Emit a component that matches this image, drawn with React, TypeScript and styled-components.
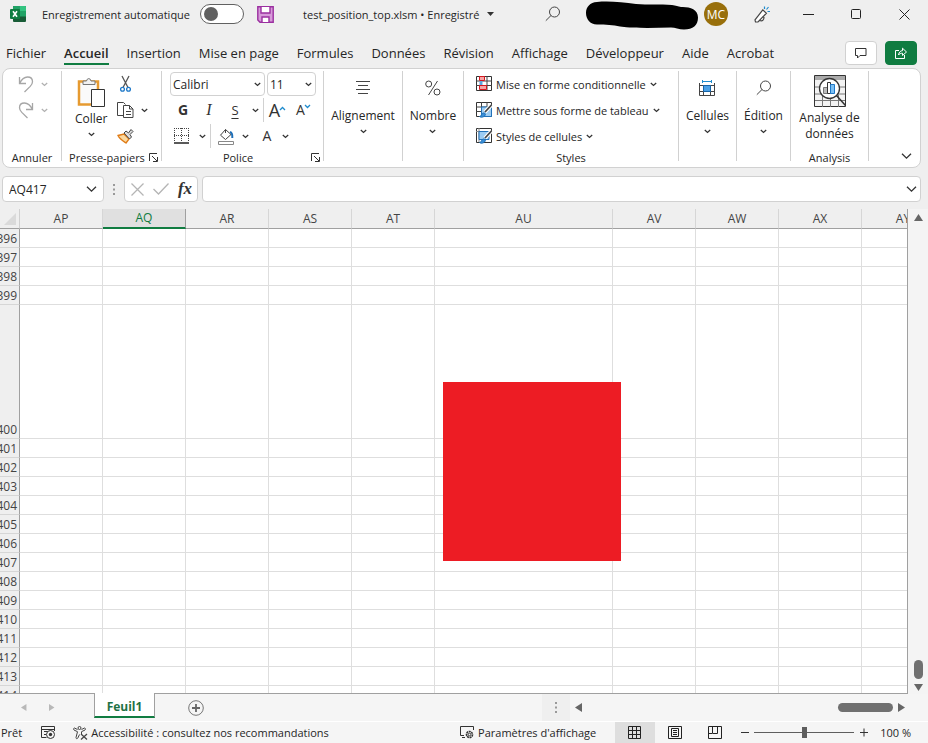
import React from "react";
import styled, { createGlobalStyle, css } from "styled-components";

const GlobalStyle = createGlobalStyle`
  * { box-sizing: border-box; }
  body { margin: 0; background: #efefef; }
  body, button, input, select { font-family: "Open Sans", "Noto Sans", sans-serif; font-size: 12px; color: #262626; }
  button { padding: 0; border: 0; background: none; white-space: nowrap; }
`;

const Window = styled.div`
  display: flex;
  flex-direction: column;
  height: 100vh;
  min-height: 480px;
  overflow: hidden;
  background: #efefef;
`;

const Icon = styled.svg`
  display: block;
  flex: none;
  fill: none;
  stroke: #444;
  overflow: visible;
`;

const Spacer = styled.div<{ $max?: number }>`
  flex: 1;
  ${(p) => p.$max && `max-width: ${p.$max}px;`}
`;

/* ---------- title bar ---------- */

const TitleBar = styled.header`
  display: flex;
  align-items: center;
  height: 28px;
  padding-left: 10px;
  flex: none;
`;

const AutoSave = styled.label`
  display: flex;
  align-items: center;
  gap: 10px;
  margin-left: 16px;
  font-size: 11px;
  white-space: nowrap;
`;

const Toggle = styled.input`
  appearance: none;
  display: flex;
  align-items: center;
  width: 44px;
  height: 20px;
  margin: 0;
  border: 1px solid #616161;
  border-radius: 10px;
  background: #fff;
  &::before {
    content: "";
    width: 14px;
    height: 14px;
    margin-left: 3px;
    border-radius: 50%;
    background: #616161;
  }
`;

const IconButton = styled.button<{ $w?: number; $ml?: number }>`
  display: flex;
  align-items: center;
  justify-content: center;
  flex: none;
  width: ${(p) => p.$w ?? 24}px;
  height: 24px;
  margin-left: ${(p) => p.$ml ?? 0}px;
`;

const FileName = styled.button`
  display: flex;
  align-items: center;
  gap: 8px;
  margin-left: 29px;
  font-size: 11px;
`;

const Avatar = styled.button`
  width: 24px;
  height: 24px;
  margin: 0 22px 0 5px;
  border-radius: 50%;
  background: #986f0b;
  color: #fff;
  flex: none;
`;

/* ---------- ribbon tabs ---------- */

const TabBar = styled.nav`
  display: flex;
  align-items: flex-start;
  flex: none;
  height: 40px;
  padding: 0 11px 0 6px;
`;

const TabList = styled.div`
  display: flex;
  gap: 18px;
  margin-top: 15px;
`;

const Tab = styled.button<{ $active?: boolean }>`
  height: 22px;
  line-height: 18px;
  font-size: 13px;
  border-bottom: 2px solid transparent;
  ${(p) =>
    p.$active &&
    css`
      font-weight: 600;
      border-color: #107c41;
    `}
`;

const ActionButton = styled.button<{ $primary?: boolean }>`
  display: flex;
  align-items: center;
  justify-content: center;
  width: 32px;
  height: 24px;
  margin: 13px 0 0 8px;
  border: 1px solid ${(p) => (p.$primary ? "#107c41" : "#d1d1d1")};
  border-radius: 4px;
  background: ${(p) => (p.$primary ? "#107c41" : "#fff")};
`;

/* ---------- ribbon ---------- */

const Ribbon = styled.section`
  display: flex;
  flex: none;
  height: 100px;
  margin: 0 7px 0 2px;
  padding: 2px 0 6px;
  border: 1px solid #d1d1d1;
  border-radius: 8px;
  background: #fff;
`;

const Group = styled.div<{ $w: number }>`
  display: flex;
  flex-direction: column;
  flex: none;
  width: ${(p) => p.$w}px;
  border-right: 1px solid #d1d1d1;
`;

const GroupBody = styled.div<{ $pad?: number; $right?: number; $center?: boolean }>`
  display: flex;
  flex: 1;
  padding-left: ${(p) => p.$pad ?? 0}px;
  padding-right: ${(p) => p.$right ?? 0}px;
  justify-content: ${(p) => (p.$center ? "center" : "flex-start")};
`;

const GroupFooter = styled.div`
  display: flex;
  align-items: center;
  height: 8px;
  padding: 0 3px;
`;

const GroupLabel = styled.span`
  flex: 1;
  text-align: center;
  font-size: 11px;
  white-space: nowrap;
`;

const Column = styled.div`
  display: flex;
  flex-direction: column;
`;

const Row = styled.div<{ $gap?: number }>`
  display: flex;
  align-items: center;
  height: 26px;
  gap: ${(p) => p.$gap ?? 0}px;
`;

const BigButton = styled.button<{ $top?: number; $gap?: number }>`
  display: flex;
  flex-direction: column;
  align-items: center;
  padding-top: ${(p) => p.$top ?? 9}px;
  line-height: 16px;
  gap: ${(p) => p.$gap ?? 12}px;
`;

const BigText = styled.span`
  display: flex;
  flex-direction: column;
  align-items: center;
  gap: 5px;
`;

const StyleButton = styled.button`
  display: flex;
  align-items: center;
  gap: 4px;
  height: 26px;
  font-size: 11px;
`;

const SelectBox = styled.label<{ $w: number }>`
  display: flex;
  align-items: center;
  width: ${(p) => p.$w}px;
  height: 24px;
  padding-right: 3px;
  border: 1px solid #d1d1d1;
  border-radius: 4px;
  background: #fff;
`;

const Select = styled.select`
  appearance: none;
  flex: 1;
  min-width: 0;
  padding: 0 0 0 2px;
  border: 0;
  background: none;
`;

const Divider = styled.span`
  width: 1px;
  height: 24px;
  background: #d1d1d1;
`;

const Letter = styled.button<{ $kind: "bold" | "italic" | "under" | "large" | "small" | "color" }>`
  width: 26px;
  height: 24px;
  line-height: 24px;
  color: #333;
  font-size: 13px;
  ${(p) => p.$kind === "bold" && "font-weight: 700; font-size: 14px;"}
  ${(p) => p.$kind === "italic" && 'font-style: italic; font-family: "Liberation Serif", serif; font-size: 16px;'}
  ${(p) => p.$kind === "under" && "text-decoration: underline; text-underline-offset: 3px;"}
  ${(p) => p.$kind === "large" && "font-size: 18px;"}
  ${(p) => p.$kind === "small" && "font-size: 14px;"}
  ${(p) => p.$kind === "color" && "font-size: 14px; margin-left: 5px;"}
`;

const Caret = styled.sup`
  display: inline-block;
  vertical-align: 7px;
  line-height: 0;
`;

const Expand = styled.div`
  display: flex;
  flex: 1;
  justify-content: flex-end;
  align-items: flex-end;
  padding: 0 8px 2px 0;
`;

/* ---------- formula bar ---------- */

const FormulaBar = styled.div`
  display: flex;
  align-items: center;
  flex: none;
  height: 41px;
  padding: 1px 7px 0 2px;
`;

const Field = styled.label<{ $w?: number }>`
  display: flex;
  align-items: center;
  ${(p) => (p.$w ? `width: ${p.$w}px;` : "flex: 1;")}
  height: 26px;
  padding: 0 ${(p) => (p.$w ? 6 : 3)}px 0 6px;
  border: 1px solid #d1d1d1;
  border-radius: 4px;
  background: #fff;
`;

const TextInput = styled.input`
  flex: 1;
  min-width: 0;
  border: 0;
  padding: 0;
  background: none;
  outline: none;
`;

const FormulaActions = styled.div`
  display: flex;
  align-items: center;
  width: 74px;
  height: 26px;
  margin-right: 4px;
  border: 1px solid #d1d1d1;
  border-radius: 4px;
  background: #fff;
`;

const FxButton = styled.button`
  width: 24px;
  font: italic 700 17px "Liberation Serif", serif;
  line-height: 24px;
  color: #333;
`;

/* ---------- sheet ---------- */

const SheetArea = styled.main`
  display: flex;
  flex: 1;
  min-height: 0;
`;

const Sheet = styled.div`
  position: relative;
  flex: 1;
  min-width: 0;
  overflow: hidden;
  border-bottom: 1px solid #a0a0a0;
`;

const Table = styled.table`
  table-layout: fixed;
  width: 945px;
  border-collapse: separate;
  border-spacing: 0;
`;

const Col = styled.col<{ $w: number }>`
  width: ${(p) => p.$w}px;
`;

const ColHead = styled.th<{ $selected?: boolean }>`
  height: 20px;
  padding: 0;
  font-weight: 400;
  line-height: 18px;
  color: ${(p) => (p.$selected ? "#107c41" : "#444")};
  background: ${(p) => (p.$selected ? "#e0e0e0" : "#efefef")};
  border-right: 1px solid ${(p) => (p.$selected ? "#a0a0a0" : "#d6d6d6")};
  border-bottom: ${(p) => (p.$selected ? "2px solid #107c41" : "1px solid #a0a0a0")};
`;

const Corner = styled.td`
  padding: 0 0 0 4px;
  background: #efefef;
  border-right: 1px solid #d0d0d0;
  border-bottom: 1px solid #a0a0a0;
`;

const RowHead = styled.th<{ $h: number }>`
  height: ${(p) => p.$h}px;
  padding: 0 2px 0 0;
  overflow: hidden;
  vertical-align: bottom;
  font-weight: 400;
  color: #444;
  background: #efefef;
  border-right: 1px solid #a0a0a0;
  border-bottom: 1px solid #d6d6d6;
`;

const RowNumber = styled.div`
  display: flex;
  justify-content: flex-end;
  line-height: 17px;
`;

const Cell = styled.td`
  padding: 0;
  background: #fff;
  border-right: 1px solid #dedede;
  border-bottom: 1px solid #dedede;
`;

const RedSquare = styled.div`
  position: absolute;
  left: 443px;
  top: 173px;
  width: 178px;
  height: 179px;
  background: #ed1c24;
`;

const VScroll = styled.div`
  display: flex;
  flex-direction: column;
  align-items: center;
  width: 21px;
  padding: 5px 0 1px;
  border-left: 1px solid #a0a0a0;
  background: #f4f4f4;
`;

const Thumb = styled.div<{ $vertical?: boolean }>`
  width: ${(p) => (p.$vertical ? 9 : 55)}px;
  height: ${(p) => (p.$vertical ? 19 : 9)}px;
  margin: ${(p) => (p.$vertical ? "0 0 5px" : "0 5px 0 0")};
  border-radius: 5px;
  background: #707070;
`;

/* ---------- sheet tabs ---------- */

const SheetTabs = styled.div`
  display: flex;
  align-items: center;
  flex: none;
  height: 27px;
  padding: 0 21px 0 12px;
  background: #f5f5f5;
`;

const SheetTab = styled.button`
  align-self: flex-start;
  width: 61px;
  height: 25px;
  margin: -1px 29px 0 30px;
  padding-top: 3px;
  border: 1px solid #a0a0a0;
  border-top: 0;
  border-bottom: 2px solid #107c41;
  background: #fff;
  color: #1e7145;
  font-weight: 700;
  position: relative;
`;

const Splitter = styled.div`
  display: flex;
  align-items: center;
  justify-content: center;
  width: 28px;
  height: 100%;
  background: #efefef;
`;

const HScroll = styled.div`
  display: flex;
  align-items: center;
  width: 337px;
  padding-left: 5px;
`;

/* ---------- status bar ---------- */

const StatusBar = styled.footer`
  display: flex;
  align-items: center;
  flex: none;
  height: 22px;
  padding: 0 17px 0 1px;
  border-top: 1px solid #fff;
  background: #f5f5f5;
  font-size: 11px;
`;

const StatusButton = styled.button<{ $ml: number }>`
  display: flex;
  align-items: center;
  gap: 3px;
  margin-left: ${(p) => p.$ml}px;
  font-size: 11px;
`;

const ViewButton = styled.button<{ $active?: boolean }>`
  display: flex;
  align-items: center;
  justify-content: center;
  width: 40px;
  height: 21px;
  background: ${(p) => (p.$active ? "#dedede" : "transparent")};
`;

const ZoomSlider = styled.input`
  appearance: none;
  width: 100px;
  height: 11px;
  margin: 0 5px;
  background: linear-gradient(#5e5e5e, #5e5e5e) center / 100% 1px no-repeat;
  &::-webkit-slider-thumb {
    appearance: none;
    width: 5px;
    height: 11px;
    background: #5e5e5e;
  }
`;

const ZoomValue = styled.button`
  margin-left: 12px;
  font-size: 11px;
`;

/* ---------- small glyphs ---------- */

const Chevron = ({ muted, large }: { muted?: boolean; large?: boolean }) =>
  large ? (
    <Icon width="11" height="6" viewBox="0 0 11 6" strokeWidth="1.3">
      <path d="M1 .7l4.5 4.5L10 .7" stroke="#333" />
    </Icon>
  ) : (
    <Icon width="7" height="5" viewBox="0 0 7 5" strokeWidth="1.3">
      <path d="M.8 1l2.7 2.4L6.2 1" stroke={muted ? "#b0b0b0" : "#333"} />
    </Icon>
  );

const Launcher = () => (
  <Icon width="9" height="9" viewBox="0 0 9 9">
    <path d="M.5 8V.5H8M3 3l5 5M8.5 4v4.5H4" stroke="#333" />
  </Icon>
);

const Triangle = ({ dir, muted }: { dir: "up" | "down" | "left" | "right"; muted?: boolean }) => {
  const shapes = {
    up: "M4.5 0L9 7H0z",
    down: "M0 0h9L4.5 7z",
    left: "M7 0v9L0 4.5z",
    right: "M0 0v9l7-4.5z",
  };
  const s = muted ? 7 : 9;
  return (
    <Icon width={s} height={s} viewBox="0 0 9 9">
      <path d={shapes[dir]} fill={muted ? "#b8b8b8" : "#666"} stroke="none" />
    </Icon>
  );
};

const Magnifier = () => (
  <Icon width="16" height="16" viewBox="0 0 16 16">
    <circle cx="9.5" cy="6" r="5" />
    <path d="M6 9.5L.8 14.7" />
  </Icon>
);

const Dots = () => (
  <Icon width="2" height="11" viewBox="0 0 2 11">
    <path d="M0 1h2M0 5.5h2M0 10h2" strokeWidth="2" stroke="#999" />
  </Icon>
);

const ExcelLogo = () => (
  <Icon width="16" height="16" viewBox="0 0 16 16">
    <g stroke="none">
      <rect x="3" width="13" height="16" rx="1" fill="#185c37" />
      <path d="M4 0h5.5v5H3V1a1 1 0 0 1 1-1z" fill="#21a366" />
      <path d="M9.5 0H15a1 1 0 0 1 1 1v4H9.5z" fill="#33c481" />
      <path d="M3 5h6.5v5.5H3z" fill="#107c41" />
      <path d="M9.5 5H16v5.5H9.5z" fill="#21a366" />
      <rect y="3" width="10" height="10" rx="1" fill="#107c41" />
    </g>
    <path d="M3 5.2L7 10.8M7 5.2L3 10.8" stroke="#fff" strokeWidth="1.6" />
  </Icon>
);

const SaveIcon = () => (
  <Icon width="17" height="17" viewBox="0 0 17 17">
    <path d="M.8.8h15.400v15.400H3L.8 14z" fill="#d69ad9" stroke="#9b2fa0" strokeWidth="1.4" />
    <path d="M4 1v6h9V1M5 16v-5h7v5" fill="#fff" stroke="#9b2fa0" strokeWidth="1.4" />
  </Icon>
);

const Redaction = () => (
  <Icon width="113" height="27" viewBox="0 0 113 27">
    <path
      d="M11 1C22 0 36 1 50 3c12 1 24 0 36 1 4 .5 6 1.500 9 2 8-.5 17 2 17 10.500 0 8-5 12-14 12-5 0-9-2-13-2-18 .5-36 1-51-1-7-1.500-14-2-23-2C4 23.500 0 18 0 12 0 6 4 1.500 11 1z"
      fill="#000"
      stroke="none"
    />
  </Icon>
);

const PenIcon = () => (
  <Icon width="17" height="17" viewBox="0 0 17 17">
    <path d="M1 13.8L8.8 3.8l3.600 3.400L4 16H1.5zM5.5 14.5c3 .8 4.5 0 4.5-3.5" fill="#fff" strokeWidth="1.2" />
    <path d="M10.5 3V.5M12.5 3.5l2-2.500M13.5 5.5H16" stroke="#1e8bcd" strokeWidth="1.2" />
  </Icon>
);

const UndoIcon = ({ flip }: { flip?: boolean }) => (
  <Icon width="16" height="17" viewBox="0 0 16 17">
    <path
      d="M1.5 1v6.5H8M1.5 7.5C3.5 3.5 6.5 1 9.5 1c3 0 5 2 5 4.7 0 2-1 3.3-2.300 4.700L6.5 16"
      transform={flip ? "translate(16 0) scale(-1 1)" : undefined}
      stroke="#a6a6a6"
      strokeWidth="1.3"
    />
  </Icon>
);

const PasteIcon = () => (
  <Icon width="28" height="30" viewBox="0 0 28 30">
    <path d="M2 4.500h19v23H2z" fill="#fafafa" stroke="#e69a30" strokeWidth="2.500" />
    <path d="M6 7.500V4h3.500a2.300 3 0 0 1 4.500 0H18v3.500z" fill="#f2f2f2" stroke="#777" />
    <path d="M14.500 12.500h13v17h-13z" fill="#fff" stroke="#333" />
  </Icon>
);

const ScissorsIcon = () => (
  <Icon width="18" height="16" viewBox="0 0 18 16">
    <path d="M5 0l6 11.5M12 0L6 11.5" stroke="#555" strokeWidth="1.3" />
    <circle cx="5.5" cy="13.3" r="1.9" stroke="#1e78c8" strokeWidth="1.3" />
    <circle cx="11.5" cy="13.3" r="1.9" stroke="#1e78c8" strokeWidth="1.3" />
  </Icon>
);

const CopyIcon = () => (
  <Icon width="18" height="17" viewBox="0 0 18 17">
    <path d="M6 13.5H.5V.5h6L8.500 2.500" />
    <path d="M6.5 3.5h6l3.5 3.5v8.500H6.5zM12.5 3.5V7H16M9 9.500h5M9 12.500h5" fill="#fff" />
  </Icon>
);

const BrushIcon = () => (
  <Icon width="18" height="16" viewBox="0 0 18 16">
    <path d="M1 7.5l6-1.500 5 5-3 4C6 13 2.500 11 1 7.5z" fill="#fbd9a0" stroke="#e07b16" strokeWidth="1.3" />
    <path d="M7 5l2-2 2.500 2L14 1.500l2 2L13 6.500 14.500 9l-2 2z" fill="#ddd" stroke="#444" />
  </Icon>
);

const BorderIcon = () => (
  <Icon width="16" height="16" viewBox="0 0 16 16">
    <path d="M0 .5h15M.5 0v13M14.500 0v13M7.5 0v13M0 7.5h15" strokeDasharray="1 1" stroke="#444" />
    <path d="M0 15h15" stroke="#000" strokeWidth="1.3" />
  </Icon>
);

const BucketIcon = () => (
  <Icon width="17" height="17" viewBox="0 0 17 17">
    <path d="M7.5 1.5l5.5 5-5.500 5L2.5 7.2zM7.5 1.5V5" />
    <path d="M12 4c2 .5 2.500 3 2.300 6" stroke="#1e6fb8" strokeWidth="2" />
    <path d="M.5 13.5h15v3H.5z" fill="#fff" stroke="#888" />
  </Icon>
);

const AlignIcon = () => (
  <Icon width="15" height="16" viewBox="0 0 15 16">
    <path d="M0 1.5h14M2 5.5h10M0 9.5h14M2 13.5h10" />
  </Icon>
);

const PercentIcon = () => (
  <Icon width="16" height="16" viewBox="0 0 16 16">
    <circle cx="3.7" cy="4" r="3" />
    <circle cx="12" cy="12" r="3" />
    <path d="M12.5 1L3.5 15" />
  </Icon>
);

const TableIcon = ({ kind }: { kind: "conditional" | "format" | "cells" }) => (
  <Icon width="16" height="16" viewBox="0 0 16 16">
    <path d="M.5.5h15v14H.5z" fill="#fff" stroke="#333" />
    {kind === "conditional" && (
      <>
        <path d="M0 5h16M0 9.5h16M5.5 0v14M11 0v14" />
        <path d="M3.5.5h5v4h-5zM3.5 9.5h7v4h-7z" fill="#f6a5a5" stroke="#d6181f" />
        <path d="M3.5 5h3v4h-3z" fill="#5aa7e0" stroke="none" />
      </>
    )}
    {kind !== "conditional" && (
      <>
        {kind === "format" ? (
          <path d="M0 5h16M0 9.5h16M5.5 0v14M11 0v14" />
        ) : (
          <path d="M3 0v14M0 3.5h16" stroke="#888" />
        )}
        <path d={kind === "format" ? "M5.5 5h10v9.500h-10z" : "M3 3.5h10v8H3z"} fill="#9dccf2" stroke="#2272b9" />
        <path d="M15.5 3L9 10" stroke="#fff" strokeWidth="4" />
        <path d="M15.5 3L9 10" stroke="#444" strokeWidth="1.8" />
        <path d="M3.5 14.5c2.500 0 1.500-3.500 4-3.500 2 0 2.500 1.800 1 3-1.500 1.500-4 1.500-5 .5z" fill="#3a8fd8" stroke="#2272b9" />
      </>
    )}
  </Icon>
);

const CellsIcon = () => (
  <Icon width="16" height="16" viewBox="0 0 16 16">
    <path d="M.5 3v12.500h15V3M0 5.5h16M0 11.5h16M4.5 5v10.500M11.5 5v10.500" />
    <path d="M4.5 5.5h7v6h-7z" fill="#4aa0e6" stroke="#1464a8" />
    <path d="M3.5 0v3M12.5 0v3M3.5 1.5h9" stroke="#1e8bcd" />
  </Icon>
);

const AnalysisIcon = () => (
  <Icon width="32" height="32" viewBox="0 0 32 32">
    <path d="M.5.5h31v31H.5z" fill="#f3f3f3" stroke="#333" />
    <path d="M1 1h30v4H1z" fill="#aaa" stroke="none" />
    <path d="M1 12h30M1 19h30M1 25.5h30M8.5 20v12M16.5 20v12M24.5 20v12" stroke="#777" />
    <circle cx="15.5" cy="13.5" r="10" fill="#fff" stroke="#333" strokeWidth="1.3" />
    <path d="M22.5 20.5l9 10" stroke="#333" strokeWidth="1.5" />
    <path d="M9.5 12.5h4v6h-4z" fill="#bbb" stroke="#777" />
    <path d="M13.5 7.5h3v11h-3z" fill="#fff" stroke="#333" />
    <path d="M16.5 9.5h4v9h-4z" fill="#7cc0f4" stroke="#1e78c8" />
  </Icon>
);

const MacroIcon = () => (
  <Icon width="15" height="13" viewBox="0 0 15 13">
    <path d="M5.5 11.5h-5V.5h13V5M.5 3.5h13M3 5.5h4M3 8.5h2" stroke="#333" />
    <circle cx="9.5" cy="8.5" r="4" fill="#f5f5f5" stroke="#333" />
    <circle cx="9.5" cy="8.5" r="1.7" fill="#333" stroke="none" />
  </Icon>
);

const AccessIcon = () => (
  <Icon width="15" height="14" viewBox="0 0 15 14">
    <circle cx="6.5" cy="2" r="1.5" />
    <path d="M4.5 3.5L1.5 2C0 2.500.5 3.500 1 4l3.500 1.700L3 11.500c0 1.500 1.300 1.500 1.800.5l1.700-3.500M8.5 3.500L11.5 2c1.500.5 1 1.500.5 2L8.500 5.700V8" />
    <path d="M8 8l6 5.5M14 8l-6 5.5" strokeWidth="1.3" />
  </Icon>
);

const DisplayIcon = () => (
  <Icon width="15" height="13" viewBox="0 0 15 13">
    <path d="M4 9.5H.5V.5h13V4M2 11.5h3" stroke="#333" />
    <circle cx="9.5" cy="8.5" r="3" stroke="#333" strokeWidth="1.6" strokeDasharray="2 .6" />
    <circle cx="9.5" cy="8.5" r="1.3" stroke="#333" />
  </Icon>
);

/* ---------- data ---------- */

const TABS = ["Fichier", "Accueil", "Insertion", "Mise en page", "Formules", "Données", "Révision", "Affichage", "Développeur", "Aide", "Acrobat"];
const COLUMNS = [
  { name: "AP", width: 83 },
  { name: "AQ", width: 83 },
  { name: "AR", width: 83 },
  { name: "AS", width: 83 },
  { name: "AT", width: 83 },
  { name: "AU", width: 178 },
  { name: "AV", width: 83 },
  { name: "AW", width: 83 },
  { name: "AX", width: 83 },
  { name: "AY", width: 83 },
];
const ROWS = Array.from({ length: 19 }, (_, i) => 396 + i);

export default function App() {
  return (
    <>
      <GlobalStyle />
      <Window>
        <TitleBar>
          <ExcelLogo />
          <AutoSave>
            Enregistrement automatique
            <Toggle type="checkbox" role="switch" />
          </AutoSave>
          <IconButton $w={17} $ml={13} aria-label="Enregistrer"><SaveIcon /></IconButton>
          <FileName>
            test_position_top.xlsm • Enregistré
            <Icon width="7" height="4" viewBox="0 0 7 4"><path d="M0 0h7L3.5 4z" fill="#333" stroke="none" /></Icon>
          </FileName>
          <Spacer />
          <IconButton aria-label="Rechercher"><Magnifier /></IconButton>
          <IconButton $w={113} $ml={21} aria-label="Compte"><Redaction /></IconButton>
          <Avatar>MC</Avatar>
          <IconButton aria-label="Nouveautés"><PenIcon /></IconButton>
          <IconButton $w={48} $ml={10} aria-label="Réduire">
            <Icon width="11" height="11" viewBox="0 0 11 11"><path d="M0 5.5h11" stroke="#222" /></Icon>
          </IconButton>
          <IconButton $w={48} aria-label="Agrandir">
            <Icon width="11" height="11" viewBox="0 0 11 11"><rect x=".5" y=".5" width="9" height="9" rx="1" stroke="#222" /></Icon>
          </IconButton>
          <IconButton $w={48} aria-label="Fermer">
            <Icon width="11" height="11" viewBox="0 0 11 11"><path d="M.5.5l10 10M10.5.5l-10 10" stroke="#222" /></Icon>
          </IconButton>
        </TitleBar>

        <TabBar>
          <TabList>
            {TABS.map((t) => <Tab key={t} $active={t === "Accueil"}>{t}</Tab>)}
          </TabList>
          <Spacer />
          <ActionButton aria-label="Commentaires">
            <Icon width="12" height="11" viewBox="0 0 12 11"><path d="M.5.5H11v7H5L2.5 10V7.5h-2z" stroke="#333" /></Icon>
          </ActionButton>
          <ActionButton $primary aria-label="Partager">
            <Icon width="12" height="12" viewBox="0 0 12 12">
              <path d="M4 3.5H.5v8h9V8M3.5 8c.5-3 2-4.300 4-4.300V1.200l4 3.800-4 3.500V6.200c-1.800 0-3 .5-4 1.800z" stroke="#fff" />
            </Icon>
          </ActionButton>
        </TabBar>

        <Ribbon>
          <Group $w={59}>
            <GroupBody $pad={15}>
              <Column>
                <Row $gap={7}><IconButton $w={16} aria-label="Annuler"><UndoIcon /></IconButton><Chevron muted /></Row>
                <Row $gap={7}><IconButton $w={16} aria-label="Rétablir"><UndoIcon flip /></IconButton><Chevron muted /></Row>
              </Column>
            </GroupBody>
            <GroupFooter><GroupLabel>Annuler</GroupLabel></GroupFooter>
          </Group>

          <Group $w={100}>
            <GroupBody $pad={13} $right={13}>
              <BigButton $top={6} $gap={4}>
                <PasteIcon />
                <BigText>Coller<Chevron /></BigText>
              </BigButton>
              <Spacer />
              <Column>
                <Row><IconButton $w={18} aria-label="Couper"><ScissorsIcon /></IconButton></Row>
                <Row $gap={6}><IconButton $w={18} aria-label="Copier"><CopyIcon /></IconButton><Chevron /></Row>
                <Row><IconButton $w={18} aria-label="Reproduire la mise en forme"><BrushIcon /></IconButton></Row>
              </Column>
            </GroupBody>
            <GroupFooter><GroupLabel>Presse-papiers</GroupLabel><Launcher /></GroupFooter>
          </Group>

          <Group $w={162}>
            <GroupBody $pad={8}>
              <Column>
                <Row $gap={2}>
                  <SelectBox $w={95}>
                    <Select aria-label="Police" defaultValue="Calibri"><option>Calibri</option></Select><Chevron />
                  </SelectBox>
                  <SelectBox $w={49}>
                    <Select aria-label="Taille" defaultValue="11"><option>11</option></Select><Chevron />
                  </SelectBox>
                </Row>
                <Row>
                  <Letter $kind="bold">G</Letter>
                  <Letter $kind="italic">I</Letter>
                  <Letter $kind="under">S</Letter>
                  <IconButton $w={15} aria-label="Soulignement"><Chevron /></IconButton>
                  <Divider />
                  <Letter $kind="large">
                    A<Caret><Icon width="5" height="3" viewBox="0 0 5 3"><path d="M0 3l2.5-2.500L5 3" stroke="#1e8bcd" strokeWidth="1.3" /></Icon></Caret>
                  </Letter>
                  <Letter $kind="small">
                    A<Caret><Icon width="5" height="3" viewBox="0 0 5 3"><path d="M0 0l2.5 2.500L5 0" stroke="#1e8bcd" strokeWidth="1.3" /></Icon></Caret>
                  </Letter>
                </Row>
                <Row>
                  <IconButton aria-label="Bordures"><BorderIcon /></IconButton>
                  <IconButton $w={16} aria-label="Options de bordure"><Chevron /></IconButton>
                  <Divider />
                  <IconButton $w={30} aria-label="Remplissage"><BucketIcon /></IconButton>
                  <IconButton $w={8} aria-label="Options de remplissage"><Chevron /></IconButton>
                  <Letter $kind="color">A</Letter>
                  <IconButton $w={11} aria-label="Couleur de police"><Chevron /></IconButton>
                </Row>
              </Column>
            </GroupBody>
            <GroupFooter><GroupLabel>Police</GroupLabel><Launcher /></GroupFooter>
          </Group>

          <Group $w={79}>
            <GroupBody $center><BigButton><AlignIcon /><BigText>Alignement<Chevron /></BigText></BigButton></GroupBody>
          </Group>
          <Group $w={61}>
            <GroupBody $center><BigButton><PercentIcon /><BigText>Nombre<Chevron /></BigText></BigButton></GroupBody>
          </Group>

          <Group $w={215}>
            <GroupBody $pad={12}>
              <Column>
                <StyleButton><TableIcon kind="conditional" />Mise en forme conditionnelle<Chevron /></StyleButton>
                <StyleButton><TableIcon kind="format" />Mettre sous forme de tableau<Chevron /></StyleButton>
                <StyleButton><TableIcon kind="cells" />Styles de cellules<Chevron /></StyleButton>
              </Column>
            </GroupBody>
            <GroupFooter><GroupLabel>Styles</GroupLabel></GroupFooter>
          </Group>

          <Group $w={58}>
            <GroupBody $center><BigButton><CellsIcon /><BigText>Cellules<Chevron /></BigText></BigButton></GroupBody>
          </Group>
          <Group $w={54}>
            <GroupBody $center><BigButton><Magnifier /><BigText>Édition<Chevron /></BigText></BigButton></GroupBody>
          </Group>
          <Group $w={78}>
            <GroupBody $center>
              <BigButton $top={4} $gap={3}>
                <AnalysisIcon />
                <span>Analyse de<br />données</span>
              </BigButton>
            </GroupBody>
            <GroupFooter><GroupLabel>Analysis</GroupLabel></GroupFooter>
          </Group>
          <Expand><button aria-label="Options du ruban"><Chevron large /></button></Expand>
        </Ribbon>

        <FormulaBar>
          <Field $w={102}>
            <TextInput aria-label="Zone Nom" defaultValue="AQ417" />
            <Chevron large />
          </Field>
          <IconButton $w={20} aria-label="Redimensionner"><Dots /></IconButton>
          <FormulaActions>
            <IconButton aria-label="Annuler la saisie">
              <Icon width="13" height="13" viewBox="0 0 13 13"><path d="M.5.5l12 12M12.5.5l-12 12" stroke="#b5b5b5" strokeWidth="1.3" /></Icon>
            </IconButton>
            <IconButton aria-label="Valider">
              <Icon width="16" height="12" viewBox="0 0 16 12"><path d="M.5 6l5 5L15.5.5" stroke="#b5b5b5" strokeWidth="1.3" /></Icon>
            </IconButton>
            <FxButton aria-label="Insérer une fonction">fx</FxButton>
          </FormulaActions>
          <Field>
            <TextInput aria-label="Barre de formule" />
            <Chevron large />
          </Field>
        </FormulaBar>

        <SheetArea>
          <Sheet>
            <Table>
              <colgroup>
                <Col $w={20} />
                {COLUMNS.map((c) => <Col key={c.name} $w={c.width} />)}
              </colgroup>
              <thead>
                <tr>
                  <Corner><Icon width="12" height="12" viewBox="0 0 12 12"><path d="M12 0v12H0z" fill="#dadada" stroke="none" /></Icon></Corner>
                  {COLUMNS.map((c) => <ColHead key={c.name} scope="col" $selected={c.name === "AQ"}>{c.name}</ColHead>)}
                </tr>
              </thead>
              <tbody>
                {ROWS.map((r) => (
                  <tr key={r}>
                    <RowHead scope="row" $h={r === 400 ? 134 : 19}><RowNumber>{r}</RowNumber></RowHead>
                    {COLUMNS.map((c) => <Cell key={c.name} />)}
                  </tr>
                ))}
              </tbody>
            </Table>
            <RedSquare />
          </Sheet>
          <VScroll>
            <Triangle dir="up" />
            <Spacer />
            <Thumb $vertical />
            <Triangle dir="down" />
          </VScroll>
        </SheetArea>

        <SheetTabs>
          <IconButton aria-label="Feuille précédente"><Triangle dir="left" muted /></IconButton>
          <IconButton $ml={4} aria-label="Feuille suivante"><Triangle dir="right" muted /></IconButton>
          <SheetTab>Feuil1</SheetTab>
          <IconButton aria-label="Nouvelle feuille">
            <Icon width="16" height="16" viewBox="0 0 16 16">
              <circle cx="8" cy="8" r="7.3" stroke="#777" />
              <path d="M8 4v8M4 8h8" stroke="#666" strokeWidth="1.8" />
            </Icon>
          </IconButton>
          <Spacer />
          <Splitter><Dots /></Splitter>
          <HScroll>
            <Triangle dir="left" />
            <Spacer />
            <Thumb />
            <Triangle dir="right" />
          </HScroll>
        </SheetTabs>

        <StatusBar>
          <span>Prêt</span>
          <StatusButton $ml={19} aria-label="Enregistrer une macro"><MacroIcon /></StatusButton>
          <StatusButton $ml={17}><AccessIcon />Accessibilité : consultez nos recommandations</StatusButton>
          <Spacer />
          <StatusButton $ml={0}><DisplayIcon />Paramètres d'affichage</StatusButton>
          <Spacer $max={19} />
          <ViewButton $active aria-label="Normal">
            <Icon width="14" height="14" viewBox="0 0 14 14"><path d="M.5.5h12v12H.5zM4.5 0v13M8.5 0v13M0 4.5h13M0 8.5h13" stroke="#222" /></Icon>
          </ViewButton>
          <ViewButton aria-label="Mise en page">
            <Icon width="14" height="14" viewBox="0 0 14 14"><path d="M.5.5h13v12H.5zM3.5 2.5h7v8h-7zM5 4.5h4M5 6.5h4M5 8.5h4" stroke="#222" /></Icon>
          </ViewButton>
          <ViewButton aria-label="Aperçu des sauts de page">
            <Icon width="14" height="14" viewBox="0 0 14 14"><path d="M.5.5h13v12H.5zM4.5 0v7.5h5V0M0 7.5h4" stroke="#222" /></Icon>
          </ViewButton>
          <IconButton $w={9} $ml={5} aria-label="Zoom arrière">
            <Icon width="8" height="9" viewBox="0 0 8 9"><path d="M0 4.5h8" stroke="#333" /></Icon>
          </IconButton>
          <ZoomSlider type="range" aria-label="Zoom" min="10" max="190" defaultValue="100" />
          <IconButton $w={9} aria-label="Zoom avant">
            <Icon width="8" height="9" viewBox="0 0 8 9"><path d="M0 4.5h8M4 .5v8" stroke="#333" /></Icon>
          </IconButton>
          <ZoomValue>100 %</ZoomValue>
        </StatusBar>
      </Window>
    </>
  );
}
